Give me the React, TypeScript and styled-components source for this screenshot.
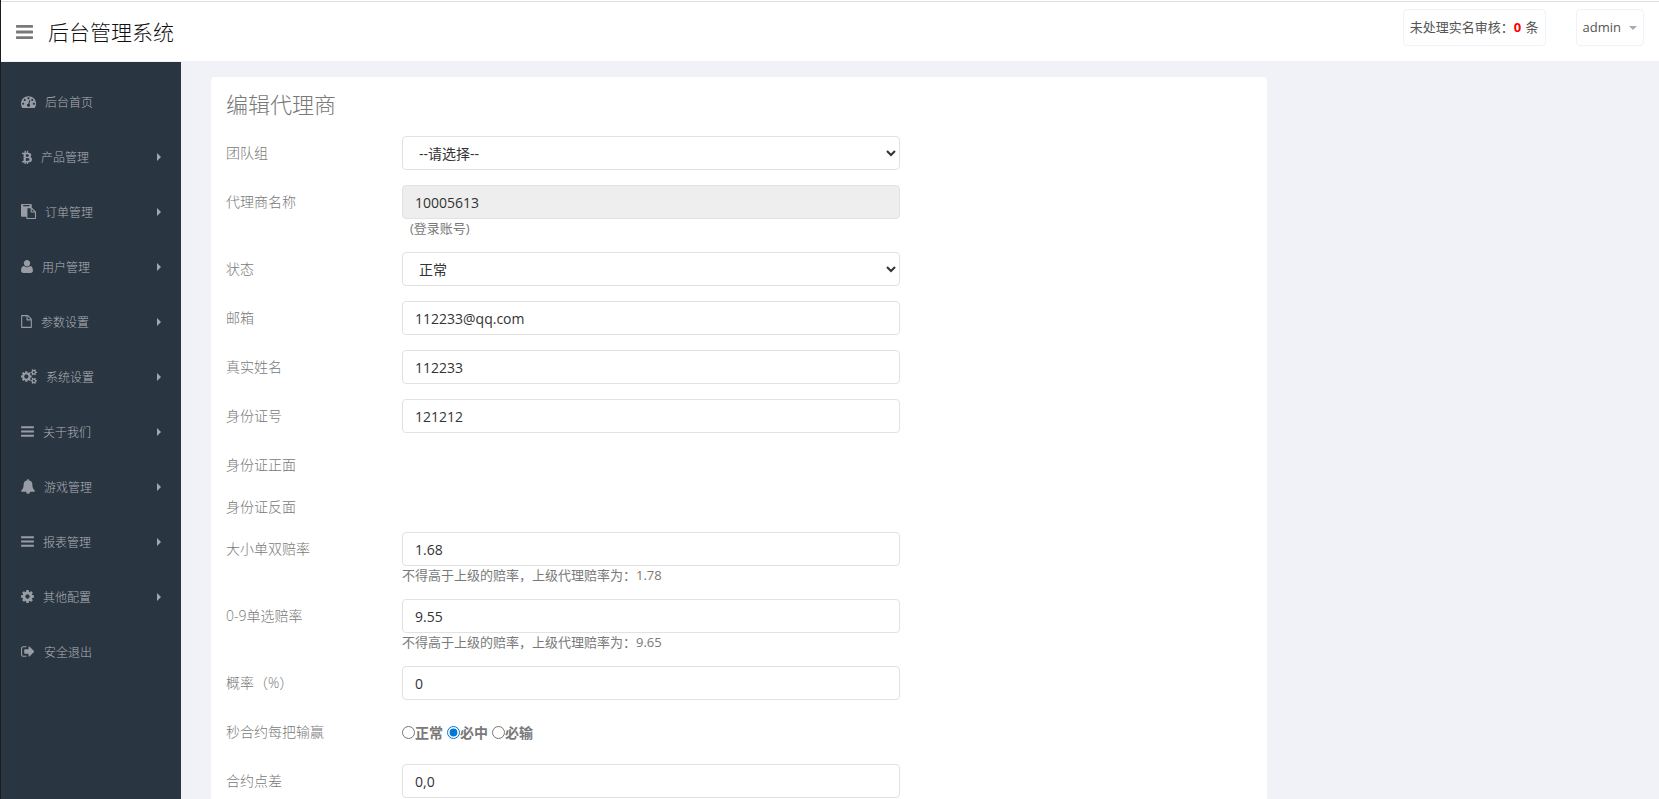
import React from "react";
import styled, { createGlobalStyle, css } from "styled-components";

const GlobalStyle = createGlobalStyle`
  *, *::before, *::after { box-sizing: border-box; }
  body {
    margin: 0;
    background: #f1f2f7;
    color: #797979;
    font-family: "Open Sans", "Noto Sans CJK SC", sans-serif;
    font-size: 13px;
    line-height: 19px;
  }
  button, input, select { font-family: inherit; }
`;

const Shell = styled.div`
  display: flex;
  flex-direction: column;
  height: 100vh;
  border-left: 1px solid #1c1c1c;
`;

const Header = styled.header`
  flex: none;
  display: flex;
  align-items: flex-start;
  height: 61px;
  margin-top: 1px;
  padding: 0 15px;
  background: #fff;
  border-top: 1px solid #dedfe0;
  border-bottom: 1px solid #f1f2f7;
  box-shadow: 0 -1px #fff;
`;

const MenuToggle = styled.button`
  display: flex;
  margin-top: 20px;
  padding: 0;
  border: 0;
  background: none;
  color: #797979;
  cursor: pointer;
`;

const Brand = styled.a`
  margin: 15px auto 0 15px;
  color: #111;
  font-size: 21px;
  font-weight: 300;
  line-height: 30px;
  text-decoration: none;
`;

const pill = css`
  display: flex;
  align-items: center;
  height: 37px;
  margin-top: 7px;
  padding: 0 6px;
  border: 1px solid #f1f2f7;
  border-radius: 4px;
  background: #fff;
  color: #555;
  font-size: 13px;
  line-height: 19px;
  text-decoration: none;
  white-space: pre;
`;

const PendingLink = styled.a`
  ${pill}
  margin-right: 30px;
`;

const Count = styled.b`
  margin-right: 1px;
  color: #f00;
`;

const UserButton = styled.button`
  ${pill}
  gap: 8px;
  cursor: pointer;
`;

const CaretDown = styled.span`
  border: 4px solid transparent;
  border-top-color: #a8adb5;
  border-bottom: 0;
`;

const Body = styled.div`
  flex: 1;
  display: flex;
  min-height: 0;
`;

const Sidebar = styled.nav`
  flex: none;
  width: 180px;
  padding-top: 12px;
  background: #2a3542;
`;

const MenuList = styled.ul`
  margin: 0;
  padding: 0;
  list-style: none;
`;

const MenuLink = styled.a`
  display: flex;
  align-items: center;
  height: 55px;
  padding: 0 20px;
  color: #989da5;
  font-size: 12px;
  text-decoration: none;
`;

const MenuText = styled.span`
  margin: 0 auto 0 9px;
  padding-top: 2px;
  color: #aeb2b7;
  font-weight: 300;
`;

const CaretRight = styled.span`
  border: 4px solid transparent;
  border-left-color: #a3a7ad;
  border-right: 0;
`;

const Main = styled.main`
  flex: 1;
  min-width: 0;
  padding: 15px;
  overflow-y: auto;
  scrollbar-width: none;
`;

const Column = styled.div`
  width: 75%;
  padding: 0 15px;
`;

const Card = styled.section`
  padding: 11px 0 15px;
  border-radius: 4px;
  background: #fff;
`;

const Title = styled.h1`
  margin: 0 15px 16px;
  font-size: 22px;
  font-weight: 300;
  line-height: 32px;
`;

const Row = styled.div<{ $short?: boolean }>`
  display: flex;
  min-height: ${(p) => (p.$short ? 27 : 34)}px;
  margin-bottom: 15px;
`;

const labelText = css`
  flex: none;
  width: calc(100% / 6);
  padding: 7px 15px 0;
  font-size: 14px;
  font-weight: 300;
  line-height: 20px;
`;

const FieldLabel = styled.label`
  ${labelText}
`;

const FieldName = styled.span`
  ${labelText}
`;

const FieldCell = styled.div`
  width: 50%;
  padding: 0 15px;
`;

const control = css`
  display: block;
  width: 100%;
  height: 34px;
  padding: 6px 12px;
  border: 1px solid #e2e2e4;
  border-radius: 4px;
  background: #fff;
  color: #333;
  font-size: 14px;
`;

const TextInput = styled.input`
  ${control}
  &:read-only { background: #eee; }
`;

const Select = styled.select`
  ${control}
  padding-right: 0;
`;

const Help = styled.div<{ $indent?: boolean }>`
  height: 18px;
  padding-left: ${(p) => (p.$indent ? 8 : 0)}px;
  line-height: 18px;
`;

const RadioCell = styled(FieldCell)`
  display: flex;
  align-items: center;
  gap: 4px;
`;

const RadioLabel = styled.label`
  display: flex;
  align-items: center;
  font-size: 14px;
  font-weight: 700;
`;

const Radio = styled.input`
  width: 13px;
  height: 13px;
  margin: 0;
  accent-color: #0078d7;
`;

type Glyph = { x: number; w: number; d: string; flip?: boolean };

const BAR = "v128q0 26-19 45t-45 19h-1408q-26 0-45-19t-19-45v-128q0-26 19-45t45-19h1408q26 0 45 19t19 45z";
const SMALL_GEAR =
  "v140q0 16-149 31-12 27-30 52 51 113 51 138 0 4-4 7-122 71-124 71-8 0-46-47t-52-68q-20 2-30 2t-30-2q-14 21-52 68t-46 47q-2 0-124-71-4-3-4-7 0-25 51-138-18-25-30-52-149-15-149-31v-140q0-16 149-31 13-29 30-52-51-113-51-138 0-4 4-7 4-2 35-20t59-34 30-16q8 0 46 46.5t52 67.5q20-2 30-2t30 2q51-71 92-112l6-2q4 0 124 70 4 3 4 7 0 25-51 138 17 23 30 52 149 15 149 31z";
const DOT = "q0-53-37.5-90.5t-90.5-37.5-90.5 37.5-37.5 90.5 37.5 90.5 90.5 37.5 90.5-37.5 37.5-90.5z";

const glyphs: Record<string, Glyph> = {
  bars: { x: 128, w: 1536, d: `M1664 1344${BAR}M1664 832${BAR}M1664 320${BAR}` },
  dashboard: {
    x: 0,
    w: 1792,
    d: `M384 1152${DOT}m192-448${DOT}m428 481l101-382q6-26-7.5-48.5t-38.5-29.5-48 6.5-30 39.5l-101 382q-60 5-107 43.5t-63 98.5q-20 77 20 146t117 89 146-20 89-117q16-60-6-117t-72-91zm660-33${DOT}m-640-640${DOT}m448 192${DOT}m320 448q0 261-141 483-19 29-54 29h-1402q-35 0-54-29-141-221-141-483 0-182 71-348t191-286 286-191 348-71 348 71 286 191 191 286 71 348z`,
  },
  bitcoin: {
    x: 256,
    w: 1280,
    d: "M1463 708q18 182-131 258 117 28 175 103t45 214q-7 71-32.5 125t-64.5 89-97 58.5-121.5 34.5-145.5 15v255h-154v-251q-80 0-122-1v252h-154v-255q-18 0-54-.5t-55-.5h-200l31-183h111q50 0 58-51v-402h16q-6-1-16-1v-287q-13-68-89-68h-111v-164l212 1q64 0 97-1v-252h154v247q82-2 122-2v-245h154v252q79 7 140 22.5t113 45 82.5 78 36.5 114.5zm-215 545q0-36-15-64t-37-46-57.5-30.5-65.5-18.5-74-9-69-3-64.5 1-47.5 1v338q8 0 37 .5t48 .5 53-1.5 58.5-4 57-8.5 55.5-14 47.5-21 39.5-30 24.5-40 9.5-51zm-71-476q0-33-12.5-58.5t-30.5-42-48-28-55-16.5-61.5-8-58-2.5-54 1-39.5.5v307q5 0 34.5.5t46.5 0 50-2 55-5.5 51.5-11 48.5-18.5 37-27 27-38.5 9-51z",
  },
  paste: {
    x: 0,
    w: 1792,
    d: "M768 1664h896v-640h-416q-40 0-68-28t-28-68v-416h-384v1152zm256-1440v-64q0-13-9.5-22.5t-22.5-9.5h-704q-13 0-22.5 9.5t-9.5 22.5v64q0 13 9.5 22.5t22.5 9.5h704q13 0 22.5-9.5t9.5-22.5zm256 672h299l-299-299v299zm512 128v672q0 40-28 68t-68 28h-960q-40 0-68-28t-28-68v-160h-544q-40 0-68-28t-28-68v-1344q0-40 28-68t68-28h1088q40 0 68 28t28 68v328q21 13 36 28l408 408q28 28 48 76t20 88z",
  },
  user: {
    x: 0,
    w: 1408,
    flip: true,
    d: "M1408 131q0 -120 -73 -189.5t-194 -69.5h-874q-121 0 -194 69.5t-73 189.5q0 53 3.5 103.5t14 109t26.5 108.5t43 97.5t62 81t85.5 53.5t111.5 20q9 0 42 -21.5t74.5 -48t108 -48t133.5 -21.5t133.5 21.5t108 48t74.5 48t42 21.5q61 0 111.5 -20t85.5 -53.5t62 -81t43 -97.5t26.5 -108.5t14 -109t3.5 -103.5zM1088 1024q0 -159 -112.5 -271.5t-271.5 -112.5t-271.5 112.5t-112.5 271.5t112.5 271.5t271.5 112.5t271.5 -112.5t112.5 -271.5z",
  },
  file: {
    x: 0,
    w: 1280,
    flip: true,
    d: "M128 0h1024v768h-416q-40 0 -68 28t-28 68v416h-512v-1280zM768 896h376q-10 29 -22 41l-313 313q-12 12 -41 22v-376zM1280 864v-896q0 -40 -28 -68t-68 -28h-1088q-40 0 -68 28t-28 68v1344q0 40 28 68t68 28h640q40 0 88 -20t76 -48l312 -312q28 -28 48 -76t20 -88z",
  },
  cogs: {
    x: -64,
    w: 1920,
    d: `M832 896q0-106-75-181t-181-75-181 75-75 181 75 181 181 75 181-75 75-181zm768 512q0-52-38-90t-90-38-90 38-38 90q0 53 37.5 90.5t90.5 37.5 90.5-37.5 37.5-90.5zm0-1024q0-52-38-90t-90-38-90 38-38 90q0 53 37.5 90.5t90.5 37.5 90.5-37.5 37.5-90.5zm-384 421v185q0 10-7 19.5t-16 10.5l-155 24q-11 35-32 76 34 48 90 115 7 11 7 20 0 12-7 19-23 30-82.5 89.5t-78.5 59.5q-11 0-21-7l-115-90q-37 19-77 31-11 108-23 155-7 24-30 24h-186q-11 0-20-7.5t-10-17.5l-23-153q-34-10-75-31l-118 89q-7 7-20 7-11 0-21-8-144-133-144-160 0-9 7-19 10-14 41-53t47-61q-23-44-35-82l-152-24q-10-1-17-9.5t-7-19.5v-185q0-10 7-19.5t16-10.5l155-24q11-35 32-76-34-48-90-115-7-11-7-20 0-12 7-20 22-30 82-89t79-59q11 0 21 7l115 90q34-18 77-32 11-108 23-154 7-24 30-24h186q11 0 20 7.5t10 17.5l23 153q34 10 75 31l118-89q8-7 20-7 11 0 21 8 144 133 144 160 0 8-7 19-12 16-42 54t-45 60q23 48 34 82l152 23q10 2 17 10.5t7 19.5zm640 533${SMALL_GEAR}m0-1024${SMALL_GEAR}`,
  },
  bell: {
    x: 64,
    w: 1664,
    d: "M912 1696q0-16-16-16-59 0-101.5-42.5t-42.5-101.5q0-16-16-16t-16 16q0 73 51.5 124.5t124.5 51.5q16 0 16-16zm816-288q0 52-38 90t-90 38h-448q0 106-75 181t-181 75-181-75-75-181h-448q-52 0-90-38t-38-90q50-42 91-88t85-119.5 74.5-158.5 50-206 19.5-260q0-152 117-282.5t307-158.5q-8-19-8-39 0-40 28-68t68-28 68 28 28 68q0 20-8 39 190 28 307 158.5t117 282.5q0 139 19.5 260t50 206 74.5 158.5 85 119.5 91 88z",
  },
  cog: {
    x: 128,
    w: 1536,
    d: "M1152 896q0-106-75-181t-181-75-181 75-75 181 75 181 181 75 181-75 75-181zm512-109v222q0 12-8 23t-20 13l-185 28q-19 54-39 91 35 50 107 138 10 12 10 25t-9 23q-27 37-99 108t-94 71q-12 0-26-9l-138-108q-44 23-91 38-16 136-29 186-7 28-36 28h-222q-14 0-24.5-8.5t-11.5-21.5l-28-184q-49-16-90-37l-141 107q-10 9-25 9-14 0-25-11-126-114-165-168-7-10-7-23 0-12 8-23 15-21 51-66.5t54-70.5q-27-50-41-99l-183-27q-13-2-21-12.5t-8-23.5v-222q0-12 8-23t19-13l186-28q14-46 39-92-40-57-107-138-10-12-10-24 0-10 9-23 26-36 98.5-107.5t94.5-71.5q13 0 26 10l138 107q44-23 91-38 16-136 29-186 7-28 36-28h222q14 0 24.5 8.5t11.5 21.5l28 184q49 16 90 37l142-107q9-9 24-9 13 0 25 10 129 119 165 170 7 8 7 22 0 12-8 23-15 21-51 66.5t-54 70.5q26 50 41 98l183 28q13 2 21 12.5t8 23.5z",
  },
  signOut: {
    x: 64,
    w: 1664,
    d: "M704 1440q0 4 1 20t.5 26.5-3 23.5-10 19.5-20.5 6.5h-320q-119 0-203.5-84.5t-84.5-203.5v-704q0-119 84.5-203.5t203.5-84.5h320q13 0 22.5 9.5t9.5 22.5q0 4 1 20t.5 26.5-3 23.5-10 19.5-20.5 6.5h-320q-66 0-113 47t-47 113v704q0 66 47 113t113 47h312l11.5 1 11.5 3 8 5.5 7 9 2 13.5zm928-544q0 26-19 45l-544 544q-19 19-45 19t-45-19-19-45v-288h-448q-26 0-45-19t-19-45v-384q0-26 19-45t45-19h448v-288q0-26 19-45t45-19 45 19l544 544q19 19 19 45z",
  },
};

function Icon({ name, size = 15 }: { name: string; size?: number }) {
  const g = glyphs[name];
  return (
    <svg
      width={Math.round((g.w / 1792) * size)}
      height={size}
      viewBox={`${g.x} 0 ${g.w} 1792`}
      fill="currentColor"
      aria-hidden="true"
    >
      <path d={g.d} transform={g.flip ? "translate(0 1536) scale(1 -1)" : undefined} />
    </svg>
  );
}

const menu = [
  { icon: "dashboard", text: "后台首页" },
  { icon: "bitcoin", text: "产品管理", sub: true },
  { icon: "paste", text: "订单管理", sub: true },
  { icon: "user", text: "用户管理", sub: true },
  { icon: "file", text: "参数设置", sub: true },
  { icon: "cogs", text: "系统设置", sub: true },
  { icon: "bars", text: "关于我们", sub: true },
  { icon: "bell", text: "游戏管理", sub: true },
  { icon: "bars", text: "报表管理", sub: true },
  { icon: "cog", text: "其他配置", sub: true },
  { icon: "signOut", text: "安全退出" },
];

type FieldProps = {
  id: string;
  label: string;
  value: string;
  readOnly?: boolean;
  help?: string;
  indentHelp?: boolean;
};

function TextField({ id, label, value, readOnly, help, indentHelp }: FieldProps) {
  return (
    <Row>
      <FieldLabel htmlFor={id}>{label}</FieldLabel>
      <FieldCell>
        <TextInput id={id} type="text" defaultValue={value} readOnly={readOnly} />
        {help && <Help $indent={indentHelp}>{help}</Help>}
      </FieldCell>
    </Row>
  );
}

function SelectField({ id, label, options }: { id: string; label: string; options: string[] }) {
  return (
    <Row>
      <FieldLabel htmlFor={id}>{label}</FieldLabel>
      <FieldCell>
        <Select id={id}>
          {options.map((o) => (
            <option key={o}>{o}</option>
          ))}
        </Select>
      </FieldCell>
    </Row>
  );
}

export default function App() {
  return (
    <Shell>
      <GlobalStyle />
      <Header>
        <MenuToggle type="button" aria-label="菜单">
          <Icon name="bars" size={20} />
        </MenuToggle>
        <Brand href="#">后台管理系统</Brand>
        <PendingLink href="#">
          未处理实名审核：<Count>0</Count> 条
        </PendingLink>
        <UserButton type="button">
          admin
          <CaretDown />
        </UserButton>
      </Header>
      <Body>
        <Sidebar>
          <MenuList>
            {menu.map((m) => (
              <li key={m.text}>
                <MenuLink href="#">
                  <Icon name={m.icon} />
                  <MenuText>{m.text}</MenuText>
                  {m.sub && <CaretRight />}
                </MenuLink>
              </li>
            ))}
          </MenuList>
        </Sidebar>
        <Main>
          <Column>
            <Card>
              <Title>编辑代理商</Title>
              <form>
                <SelectField id="team" label="团队组" options={["--请选择--"]} />
                <TextField id="agent" label="代理商名称" value="10005613" readOnly help="(登录账号)" indentHelp />
                <SelectField id="status" label="状态" options={["正常"]} />
                <TextField id="email" label="邮箱" value="112233@qq.com" />
                <TextField id="realname" label="真实姓名" value="112233" />
                <TextField id="idcard" label="身份证号" value="121212" />
                <Row $short>
                  <FieldName>身份证正面</FieldName>
                </Row>
                <Row $short>
                  <FieldName>身份证反面</FieldName>
                </Row>
                <TextField id="odds" label="大小单双赔率" value="1.68" help="不得高于上级的赔率，上级代理赔率为：1.78" />
                <TextField id="single" label="0-9单选赔率" value="9.55" help="不得高于上级的赔率，上级代理赔率为：9.65" />
                <TextField id="chance" label="概率（%）" value="0" />
                <Row role="radiogroup" aria-labelledby="result-name">
                  <FieldName id="result-name">秒合约每把输赢</FieldName>
                  <RadioCell>
                    {["正常", "必中", "必输"].map((t) => (
                      <RadioLabel key={t}>
                        <Radio type="radio" name="result" defaultChecked={t === "必中"} />
                        {t}
                      </RadioLabel>
                    ))}
                  </RadioCell>
                </Row>
                <TextField id="spread" label="合约点差" value="0,0" />
              </form>
            </Card>
          </Column>
        </Main>
      </Body>
    </Shell>
  );
}
